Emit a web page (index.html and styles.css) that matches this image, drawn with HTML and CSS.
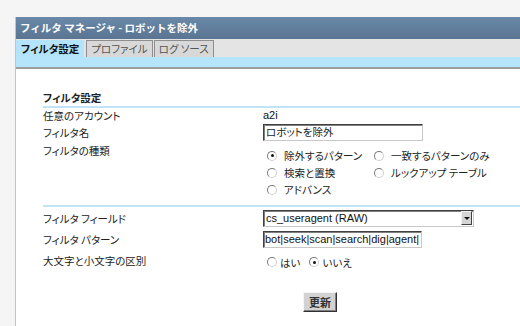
FILE: index.html
```html
<!DOCTYPE html>
<html lang="ja">
<head>
    <meta charset="UTF-8">
    <title>フィルタ マネージャ</title>
    <link rel="stylesheet" href="styles.css">
</head>
<body>
    <div class="window">
        <div class="titlebar">フィルタ マネージャ - ロボットを除外</div>
        <div class="tabs">
            <div class="tab active">フィルタ設定</div>
            <div class="tab">プロファイル</div>
            <div class="tab">ログ ソース</div>
        </div>
        <div class="tab-strip"></div>

        <div class="content">
            <div class="section-title">フィルタ設定</div>

            <div class="row row-account">
                <div class="label">任意のアカウント</div>
                <div class="value latin">a2i</div>
            </div>

            <div class="row row-name">
                <div class="label">フィルタ名</div>
                <div class="value"><div class="textbox name-box">ロボットを除外</div></div>
            </div>

            <div class="row row-type">
                <div class="label">フィルタの種類</div>
                <div class="options">
                    <div class="option"><span class="radio checked"></span>除外するパターン</div>
                    <div class="option"><span class="radio"></span>一致するパターンのみ</div>
                    <div class="option"><span class="radio"></span>検索と置換</div>
                    <div class="option"><span class="radio"></span>ルックアップ テーブル</div>
                    <div class="option"><span class="radio"></span>アドバンス</div>
                </div>
            </div>

            <div class="row row-field">
                <div class="label">フィルタ フィールド</div>
                <div class="value">
                    <div class="select latin">
                        <span>cs_useragent (RAW)</span>
                        <span class="select-arrow"></span>
                    </div>
                </div>
            </div>

            <div class="row row-pattern">
                <div class="label">フィルタ パターン</div>
                <div class="value"><div class="textbox pattern-box latin">bot|seek|scan|search|dig|agent|</div></div>
            </div>

            <div class="row row-case">
                <div class="label">大文字と小文字の区別</div>
                <div class="case-options">
                    <div class="option small"><span class="radio"></span>はい</div>
                    <div class="option small"><span class="radio checked"></span>いいえ</div>
                </div>
            </div>

            <div class="actions">
                <div class="button">更新</div>
            </div>
        </div>
    </div>
</body>
</html>
```

FILE: styles.css
```css
body {
    margin: 0;
    background: #f5f5f5;
    font-family: "Noto Sans CJK JP", sans-serif;
    font-feature-settings: "palt";
    font-size: 10.5px;
    color: #222;
}

.window {
    margin: 17px 0 0 15px;
    height: 309px;
    background: #ffffff;
    border-left: 1px solid #c4c4c4;
    overflow: hidden;
}

.titlebar {
    height: 22px;
    line-height: 22px;
    padding-left: 4px;
    background: linear-gradient(#6a88a8, #5a7592);
    color: #ffffff;
    font-weight: bold;
    font-size: 10.5px;
    font-feature-settings: normal;
}

.tabs {
    height: 18px;
    display: flex;
    align-items: flex-end;
    gap: 1px;
    background: #e4e4e4;
}

.tab {
    height: 16px;
    line-height: 16px;
    padding: 0 4px;
    background: #d8d8d8;
    border: 1px solid #8e8e8e;
    border-bottom: none;
    color: #555;
}

.tab.active {
    background: #b4e4fb;
    border-color: #b4e4fb;
    color: #111;
    font-weight: bold;
    margin-right: 1px;
}

.tab-strip {
    height: 10px;
    background: #b5e5fb;
    border-bottom: 2px solid #9e9e9e;
}

.content {
    padding: 22px 0 0 27px;
}

.section-title {
    height: 14px;
    line-height: 14px;
    padding-bottom: 1px;
    font-weight: bold;
    border-bottom: 2px solid #c0e4f3;
}

.row {
    display: flex;
    align-items: center;
}

.label {
    width: 220px;
    flex-shrink: 0;
}

.latin {
    font-family: "Liberation Sans", sans-serif;
    font-size: 11px;
    color: #111;
}

.row-account { height: 14px; }
.row-name { height: 21px; }
.row-field { height: 22px; }
.row-pattern { height: 20px; }
.row-case { height: 22px; }

.row-type {
    align-items: flex-start;
    padding-bottom: 7px;
    border-bottom: 2px solid #c0e4f3;
}

.row-type .label {
    line-height: 14px;
    padding-top: 1px;
}

.textbox {
    box-sizing: border-box;
    height: 17px;
    line-height: 14px;
    padding-left: 2px;
    background: #ffffff;
    border: 1px solid;
    border-color: #404040 #c8c8c8 #c8c8c8 #404040;
    box-shadow: inset 1px 1px 0 #808080;
    white-space: nowrap;
    overflow: hidden;
}

.name-box { width: 160px; }
.pattern-box { width: 159px; padding-left: 1px; }

.options {
    display: grid;
    grid-template-columns: 107px auto;
    grid-auto-rows: 17px;
    padding: 4px 0 0 4px;
}

.option {
    display: flex;
    align-items: center;
    white-space: nowrap;
}

.radio {
    width: 8px;
    height: 8px;
    margin-right: 7px;
    border-radius: 50%;
    border: 1px solid;
    border-color: #7a7a7a #d0d0d0 #d0d0d0 #7a7a7a;
    background: #ffffff;
    display: flex;
    align-items: center;
    justify-content: center;
}

.radio.checked::after {
    content: "";
    width: 3px;
    height: 3px;
    border-radius: 50%;
    background: #111;
}

.case-options {
    display: flex;
    gap: 9px;
    padding: 4px 0 0 4px;
}

.option.small .radio {
    margin-right: 3px;
}

.select {
    box-sizing: border-box;
    width: 211px;
    height: 17px;
    display: flex;
    align-items: center;
    justify-content: space-between;
    padding-left: 2px;
    background: #ffffff;
    border: 1px solid;
    border-color: #404040 #c8c8c8 #c8c8c8 #404040;
    box-shadow: inset 1px 1px 0 #808080;
}

.select-arrow {
    box-sizing: border-box;
    width: 11px;
    height: 14px;
    margin-right: 1px;
    background: #d4d4d4;
    border: 1px solid;
    border-color: #f0f0f0 #404040 #404040 #f0f0f0;
    display: flex;
    align-items: center;
    justify-content: center;
}

.select-arrow::after {
    content: "";
    border-left: 3px solid transparent;
    border-right: 3px solid transparent;
    border-top: 3px solid #111;
}

.actions {
    padding: 21px 0 0 260px;
}

.button {
    box-sizing: border-box;
    width: 34px;
    height: 20px;
    line-height: 18px;
    text-align: center;
    background: #d2d2d2;
    border: 1px solid;
    border-color: #f4f4f4 #303030 #303030 #f4f4f4;
    box-shadow: inset -1px -1px 0 #808080;
    font-size: 11px;
    font-weight: bold;
    color: #333;
}
```
